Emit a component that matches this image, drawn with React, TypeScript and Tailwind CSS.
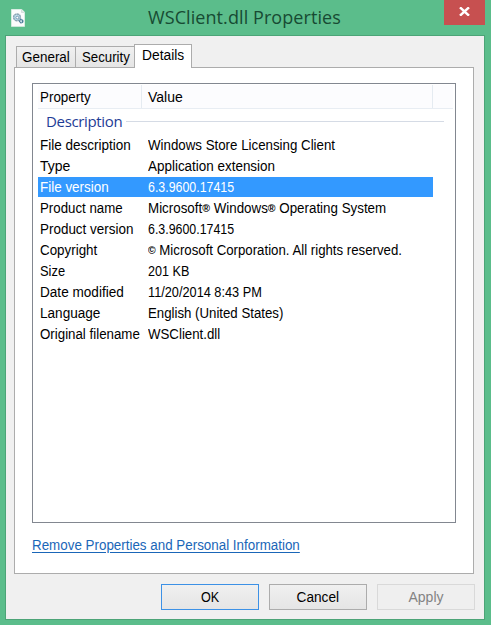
import { Fragment } from 'react';

const rows = [
  ['File description', 'Windows Store Licensing Client', 'scale-x-[0.965]', 'scale-x-[0.95]'],
  ['Type', 'Application extension', 'scale-x-[1]', 'scale-x-[0.96]'],
  ['File version', '6.3.9600.17415', 'scale-x-[0.96]', 'scale-x-[0.885]'],
  ['Product name', 'Microsoft® Windows® Operating System', 'scale-x-[0.948]', 'scale-x-[0.954]'],
  ['Product version', '6.3.9600.17415', 'scale-x-[0.96]', 'scale-x-[0.885]'],
  ['Copyright', '© Microsoft Corporation. All rights reserved.', 'scale-x-[0.955]', 'scale-x-[0.945]'],
  ['Size', '201 KB', 'scale-x-[0.92]', 'scale-x-[0.9]'],
  ['Date modified', '11/20/2014 8:43 PM', 'scale-x-[0.97]', 'scale-x-[0.91]'],
  ['Language', 'English (United States)', 'scale-x-[0.97]', 'scale-x-[0.945]'],
  ['Original filename', 'WSClient.dll', 'scale-x-[0.95]', 'scale-x-[0.947]'],
];

function FileIcon() {
  return (
    <svg width="14" height="18" viewBox="0 0 14 18">
      <path d="M.3.3h10.4l3 3v14.2H.3z" fill="#fbfcfc" stroke="#e3eee9" strokeWidth=".6" />
      <path d="M10.5.5v3h3" fill="#e2e8e8" stroke="#c4d0cc" strokeWidth=".6" />
      <circle cx="6" cy="8.3" r="3.4" fill="#bfe0f0" stroke="#8ba5b3" strokeWidth="1.5" strokeDasharray="2.2 .4" />
      <circle cx="6.3" cy="8.6" r="1.4" fill="#fff" stroke="#6f93aa" strokeWidth=".9" />
      <circle cx="10.2" cy="12.2" r="1.6" fill="#dceaf0" stroke="#4d7f9b" strokeWidth="1.5" strokeDasharray="1.6 .3" />
    </svg>
  );
}

/* The ® and © signs are set smaller than the letters around them. */
function Value({ text }: { text: string }) {
  return (
    <>
      {text.split(/([®©])/).map((part, i) => (
        <Fragment key={i}>
          {part === '®' || part === '©' ? <span className="align-[1px] text-[11px] leading-none font-bold">{part}</span> : part}
        </Fragment>
      ))}
    </>
  );
}

export default function App() {
  return (
    <div className="flex h-[625px] w-[491px] flex-col overflow-hidden bg-[#5bbd8b] font-['Liberation_Sans',Arial,sans-serif] text-[14px] leading-[21px] text-black">
      <header className="flex h-[35px] shrink-0 items-start">
        <div className="ml-[11px] mt-[9px] w-[14px]"><FileIcon /></div>
        <h1 className="ml-[123px] mt-[5px] w-[296px] whitespace-nowrap font-['Open_Sans','Noto_Sans',sans-serif] text-[18px] leading-6 tracking-[0.08px] text-[#174b33]">WSClient.dll Properties</h1>
        <button aria-label="Close" className="flex h-[25px] w-[41px] shrink-0 items-center justify-center bg-[#c75050] pb-[2px]">
          <svg width="11" height="9" viewBox="0 0 11 9" stroke="white" strokeWidth="2.4"><path d="M1 .3l9 8.4M10 .3L1 8.7" /></svg>
        </button>
      </header>
      <main className="ml-[5px] flex h-[585px] w-[480px] flex-col border border-[#4ca477] bg-[#f0f0f0] pl-2 pt-2">
        <nav className="z-10 -mb-px flex h-[24px] items-end whitespace-nowrap pl-[2px]">
          <div className="mb-px h-[21px] w-[60px] border border-b-0 border-[#acacac] bg-linear-to-b from-[#f0f0f0] to-[#e5e5e5] pl-[5px]"><span className="inline-block origin-left scale-x-[0.96]">General</span></div>
          <div className="mb-px h-[21px] w-[58px] border border-x-0 border-b-0 border-[#acacac] bg-linear-to-b from-[#f0f0f0] to-[#e5e5e5] pl-[6px]"><span className="inline-block origin-left scale-x-[0.945]">Security</span></div>
          <div className="h-[24px] w-[58px] border border-b-0 border-[#acacac] bg-white pl-[7px]"><span className="inline-block origin-left scale-x-[0.985]">Details</span></div>
        </nav>
        <section className="h-[507px] w-[460px] border border-[#acacac] bg-white pl-[17px] pt-[15px]">
          <div className="h-[440px] w-[424px] border border-[#828790] bg-white pl-[5px] pr-[2px] pt-px">
            <div className="flex h-[24px] border-b border-[#e8edf3] bg-[#fcfcfe] leading-[25px]">
              <div className="w-[104px] border-r border-[#e5ebf1] pl-[2px]"><span className="inline-block origin-left scale-x-[0.957]">Property</span></div>
              <div className="w-[291px] border-r border-[#e5ebf1] pl-[6px]">Value</div>
            </div>
            <div className="flex h-[26px] items-center pl-2 pr-[9px]">
              <span className="-mt-px w-[76px] whitespace-nowrap font-['Open_Sans','Noto_Sans',sans-serif] text-[15px] tracking-[-0.34px] text-[#1e3c96]">Description</span>
              <span className="ml-[4px] h-px flex-1 -translate-y-px bg-[#d5dbe5]" />
            </div>
            {rows.map(([name, value, nameScale, valueScale]) => (
              <div key={name} className={name === 'File version' ? 'mb-px flex h-[20px] w-[395px] bg-[#3399ff] pl-[2px] text-white' : 'flex h-[21px] w-[395px] pl-[2px]'}>
                <div className="w-[108px] shrink-0 whitespace-nowrap"><span className={'inline-block origin-left ' + nameScale}>{name}</span></div>
                <div className="whitespace-nowrap"><span className={'inline-block origin-left ' + valueScale}><Value text={value} /></span></div>
              </div>
            ))}
          </div>
          <a className="mt-[12px] block w-fit origin-left scale-x-[0.956] whitespace-nowrap text-[#1a66b8] underline underline-offset-2">Remove Properties and Personal Information</a>
        </section>
        <footer className="ml-[147px] mt-[10px] flex h-[26px] gap-[10px]">
          <button className="w-[98px] border border-[#3c91e6] bg-linear-to-b from-[#f0f0f0] to-[#e5e5e5]"><span className="inline-block scale-x-[0.9]">OK</span></button>
          <button className="w-[98px] border border-[#acacac] bg-linear-to-b from-[#f0f0f0] to-[#e5e5e5]"><span className="inline-block scale-x-[0.975]">Cancel</span></button>
          <button className="w-[98px] border border-[#d9d9d9] bg-[#efefef] text-[#838383]">Apply</button>
        </footer>
      </main>
    </div>
  );
}
